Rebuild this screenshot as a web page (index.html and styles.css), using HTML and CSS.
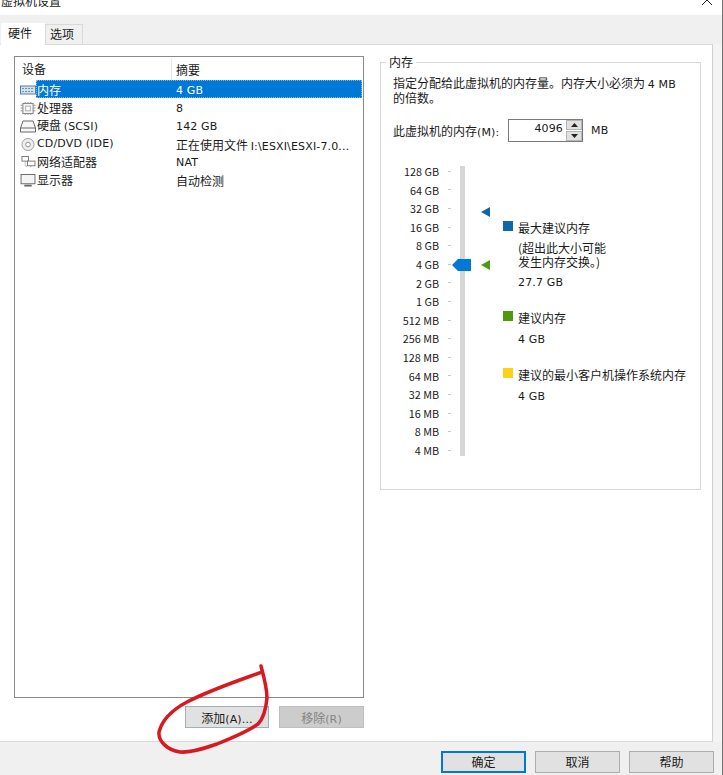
FILE: index.html
```html
<!DOCTYPE html>
<html lang="zh">
<head>
<meta charset="utf-8">
<title>虚拟机设置</title>
<link rel="stylesheet" href="styles.css">
</head>
<body>
<div class="window">
  <header class="titlebar">
    <span class="title">虚拟机设置</span>
    <svg class="close" width="12" height="6" viewBox="0 0 12 6"><path d="M6 0L1 5M6 0l5 5" stroke="#222" fill="none"/></svg>
  </header>
  <nav class="tabs">
    <div class="tab active">硬件</div>
    <div class="tab">选项</div>
  </nav>
  <main class="content">
    <section class="left">
      <div class="list">
        <div class="list-head"><span class="col1">设备</span><span class="col2">摘要</span></div>
        <div class="row selected">
          <svg class="ico" viewBox="0 0 16 12"><rect x=".5" y="1.5" width="15" height="8" fill="#cfe0ee" stroke="#5a7f9c"/><path d="M2 4h12M2 7h12" stroke="#6d93b0" stroke-dasharray="2 1"/></svg>
          <span class="name">内存</span><span class="sum lat">4 GB</span>
        </div>
        <div class="row">
          <svg class="ico" viewBox="0 0 16 14"><rect x="2.5" y="1.5" width="11" height="11" fill="#f5f5f5" stroke="#777"/><rect x="5.5" y="4.5" width="5" height="5" fill="#fff" stroke="#aaa"/><path d="M0 3.5h2M0 6.5h2M0 9.5h2M14 3.5h2M14 6.5h2M14 9.5h2M5 0v1M8 0v1M11 0v1M5 13v1M8 13v1M11 13v1" stroke="#888"/></svg>
          <span class="name">处理器</span><span class="sum lat">8</span>
        </div>
        <div class="row">
          <svg class="ico" viewBox="0 0 16 12"><path d="M3 .5h10l2.500 7v4H.5v-4zM.5 7.500h15" fill="#f7f7f7" stroke="#666"/></svg>
          <span class="name">硬盘 <span class="lat">(SCSI)</span></span><span class="sum lat">142 GB</span>
        </div>
        <div class="row">
          <svg class="ico" viewBox="0 0 16 14"><circle cx="8" cy="7" r="6.500" fill="#eee" stroke="#999"/><circle cx="8" cy="7" r="2.500" fill="#fff" stroke="#888"/></svg>
          <span class="name lat">CD/DVD (IDE)</span><span class="sum">正在使用文件 <span class="lat">I:\ESXI\ESXI-7.0...</span></span>
        </div>
        <div class="row">
          <svg class="ico" viewBox="0 0 16 14"><rect x="1.500" y=".5" width="7" height="5" fill="#fff" stroke="#777"/><rect x="7.500" y="5.500" width="8" height="5" fill="#fff" stroke="#777"/><path d="M5 6v5h2M11 11v2" stroke="#888" fill="none" stroke-dasharray="1 1"/></svg>
          <span class="name">网络适配器</span><span class="sum lat">NAT</span>
        </div>
        <div class="row">
          <svg class="ico" viewBox="0 0 16 14"><rect x=".5" y=".5" width="15" height="10" fill="#f4f4f4" stroke="#666"/><path d="M4 12.500h8" stroke="#666" stroke-width="2"/></svg>
          <span class="name">显示器</span><span class="sum">自动检测</span>
        </div>
      </div>
      <div class="list-actions">
        <button class="btn add">添加<span class="lat">(A)...</span></button>
        <button class="btn disabled">移除<span class="lat">(R)</span></button>
      </div>
    </section>
    <section class="right">
      <fieldset class="group">
        <legend>内存</legend>
        <p class="desc">指定分配给此虚拟机的内存量。内存大小必须为 <span class="lat">4 MB</span> 的倍数。</p>
        <div class="mem-input">
          <label>此虚拟机的内存<span class="lat">(M):</span></label>
          <div class="spin">
            <span class="spin-val lat">4096</span>
            <span class="spin-btns">
              <span class="spin-btn"><svg width="7" height="4" viewBox="0 0 7 4"><path d="M3.500 0L7 4H0z" fill="#222"/></svg></span>
              <span class="spin-btn"><svg width="7" height="4" viewBox="0 0 7 4"><path d="M3.500 4L7 0H0z" fill="#222"/></svg></span>
            </span>
          </div>
          <span class="unit lat">MB</span>
        </div>
        <div class="scale-area">
          <div class="scale">
            <div class="tick">128 GB</div><div class="tick">64 GB</div><div class="tick">32 GB</div><div class="tick">16 GB</div><div class="tick">8 GB</div><div class="tick">4 GB</div><div class="tick">2 GB</div><div class="tick">1 GB</div><div class="tick">512 MB</div><div class="tick">256 MB</div><div class="tick">128 MB</div><div class="tick">64 MB</div><div class="tick">32 MB</div><div class="tick">16 MB</div><div class="tick">8 MB</div><div class="tick">4 MB</div>
          </div>
          <div class="track">
            <svg class="thumb" width="19" height="12" viewBox="0 0 19 12"><path d="M0 6L6 0h13v12H6z" fill="#0078d7"/></svg>
            <svg class="mark mark-max" width="9" height="10" viewBox="0 0 9 10"><path d="M0 5L9 0v10z" fill="#0f68ad"/></svg>
            <svg class="mark mark-rec" width="9" height="10" viewBox="0 0 9 10"><path d="M0 5L9 0v10z" fill="#4c9a12"/></svg>
          </div>
          <div class="legend">
            <div class="item item-max">
              <div class="key"><span class="sw blue"></span>最大建议内存</div>
              <div class="note">(超出此大小可能<br>发生内存交换。)</div>
              <div class="val lat">27.7 GB</div>
            </div>
            <div class="item item-rec">
              <div class="key"><span class="sw green"></span>建议内存</div>
              <div class="val lat">4 GB</div>
            </div>
            <div class="item item-min">
              <div class="key"><span class="sw yellow"></span>建议的最小客户机操作系统内存</div>
              <div class="val lat">4 GB</div>
            </div>
          </div>
        </div>
      </fieldset>
    </section>
  </main>
  <footer class="footer">
    <button class="btn foot default">确定</button>
    <button class="btn foot">取消</button>
    <button class="btn foot">帮助</button>
  </footer>
</div>
<svg class="scribble" width="723" height="775" viewBox="0 0 723 775"><path d="M262 672C240 680 210 690 187 702C172 710 162 720 159 732C158 741 167 750 180 752C192 753 205 748 217 744C232 738 247 732 258 724C264 718 266 708 267 698C267 688 264 677 261 666" fill="none" stroke="#d71920" stroke-width="3.500" stroke-linecap="round" stroke-linejoin="round"/></svg>
</body>
</html>
```
FILE: styles.css
```css
* { box-sizing: border-box; }
html, body { margin: 0; padding: 0; }
body {
  width: 723px;
  height: 775px;
  overflow: hidden;
  background: #fff;
  font-family: "Noto Sans CJK SC", "Liberation Sans", sans-serif;
  font-size: 12px;
  color: #1a1a1a;
  position: relative;
}
.lat { font-family: "DejaVu Sans", "Noto Sans CJK SC", sans-serif; font-size: 11px; letter-spacing: .15px; }
.window {
  width: 723px;
  height: 775px;
  display: flex;
  flex-direction: column;
  background: #f4f4f4;
  border-right: 1px solid #707070;
}
.titlebar {
  height: 15px;
  background: #fff;
  display: flex;
  justify-content: space-between;
  align-items: flex-start;
  overflow: hidden;
  flex: none;
}
.title { font-size: 12px; line-height: 18px; margin: -8px 0 0 1px; white-space: nowrap; }
.close { margin-right: 9px; }
.tabs {
  height: 29px;
  flex: none;
  background: #f0f0f0;
  display: flex;
  align-items: flex-end;
  padding-left: 1px;
}
.tab {
  height: 20px;
  width: 38px;
  background: #f0f0f0;
  border: 1px solid #d9d9d9;
  border-bottom: 0;
  padding-right: 4px;
  text-align: center;
  line-height: 18px;
}
.tab.active {
  height: 22px;
  width: 44px;
  background: #fff;
  border-color: #fff;
  line-height: 17px;
  position: relative;
  padding-right: 6px;
  margin-bottom: -1px;
}
.content {
  height: 698px;
  flex: none;
  background: #fff;
  border-top: 1px solid #d9d9d9;
  border-bottom: 1px solid #d9d9d9;
  border-right: 1px solid #d0d0d0;
  margin-right: 9px;
  padding: 11px 0 0 14px;
  display: flex;
  gap: 16px;
}
.left { width: 350px; flex: none; display: flex; flex-direction: column; }
.list {
  height: 642px;
  border: 1px solid #8a8a8a;
  padding: 0 1px 0 2px;
  flex: none;
}
.list-head { height: 23px; display: flex; align-items: center; padding-top: 1px; }
.col1 { width: 155px; padding-left: 5px; border-right: 1px solid #e8e8e8; line-height: 22px; }
.col2 { padding-left: 4px; }
.row { height: 18px; padding-top: 2px; display: flex; align-items: center; position: relative; white-space: nowrap; }
.ico { width: 16px; height: 13px; margin-left: 3px; flex: none; position: relative; }
.name { width: 140px; flex: none; padding-left: 1px; line-height: 16px; position: relative; }
.sum { position: relative; }
.row.selected { color: #fff; }
.row.selected::before {
  content: "";
  position: absolute;
  left: 19px;
  right: 0;
  top: 0;
  bottom: 0;
  background: #0078d7;
  border: 1px dotted #7fb8e8;
}
.list-actions { display: flex; justify-content: flex-end; gap: 10px; margin-top: 8px; }
.btn {
  font-family: inherit;
  font-size: 12px;
  color: #1a1a1a;
  padding: 0;
  background: #e1e1e1;
  border: 1px solid #adadad;
  width: 85px;
  height: 22px;
  line-height: 18px;
}
.btn.add { width: 84px; border-color: #9fb0bd; padding-top: 2px; }
.btn.disabled { background: #cccccc; border-color: #bfbfbf; color: #838383; padding-top: 2px; }
.right { width: 321px; flex: none; margin-top: -1px; }
.group {
  margin: 0;
  height: 435px;
  border: 1px solid #d9d9d9;
  padding: 7px 12px 0 12px;
  min-width: 0;
}
.group legend { padding: 0 3px; margin-left: -7px; line-height: 14px; font-size: 12px; }
.desc { margin: 0; line-height: 13px; font-size: 12px; width: 293px; }
.mem-input { display: flex; align-items: center; margin-top: 14px; height: 24px; }
.mem-input label { width: 115px; }
.spin {
  width: 75px;
  height: 23px;
  border: 1px solid #7a7a7a;
  display: flex;
  justify-content: flex-end;
  align-items: center;
  background: #fff;
}
.spin-val { line-height: 18px; margin-right: 3px; margin-top: -2px; }
.spin-btns { width: 16px; height: 21px; display: flex; flex-direction: column; gap: 1px; }
.spin-btn { flex: 1; background: #e1e1e1; border: 1px solid #b5b5b5; display: flex; align-items: center; justify-content: center; }
.unit { margin-left: 8px; }
.scale-area { display: flex; margin-top: 21px; }
.scale { width: 58px; flex: none; margin-top: -1px; }
.tick {
  height: 18.6px;
  font-size: 10.800px;
  line-height: 18.6px;
  text-align: right;
  white-space: nowrap;
  display: flex;
  justify-content: flex-end;
  align-items: center;
}
.tick::after { content: ""; width: 3px; height: 1px; background: #c8c8c8; margin-left: 9px; }
.track { width: 5px; height: 290px; background: #d6d6d6; flex: none; margin: 3px 0 0 9px; position: relative; }
.thumb { position: absolute; left: -8px; top: 93px; }
.mark { position: absolute; left: 21px; }
.mark-max { top: 41px; }
.mark-rec { top: 94px; }
.legend { margin-left: 53px; padding-top: 57px; width: 200px; white-space: nowrap; }
.key { position: relative; line-height: 16px; }
.sw { position: absolute; left: -15px; top: 1px; width: 10px; height: 10px; }
.blue { background: #0f68ad; }
.green { background: #4c9a12; }
.yellow { background: #fcd116; }
.note { line-height: 14px; margin-top: 5px; }
.val { line-height: 16px; margin-top: 6px; }
.item-rec { margin-top: 19px; }
.item-min { margin-top: 19px; }
.footer {
  flex: 1;
  background: #f0f0f0;
  display: flex;
  justify-content: flex-end;
  gap: 9px;
  padding: 9px 8px 0 0;
}
.btn.foot { width: 85px; height: 22px; }
.btn.default { border: 2px solid #0078d7; }
.scribble { position: absolute; left: 0; top: 0; pointer-events: none; }
```
